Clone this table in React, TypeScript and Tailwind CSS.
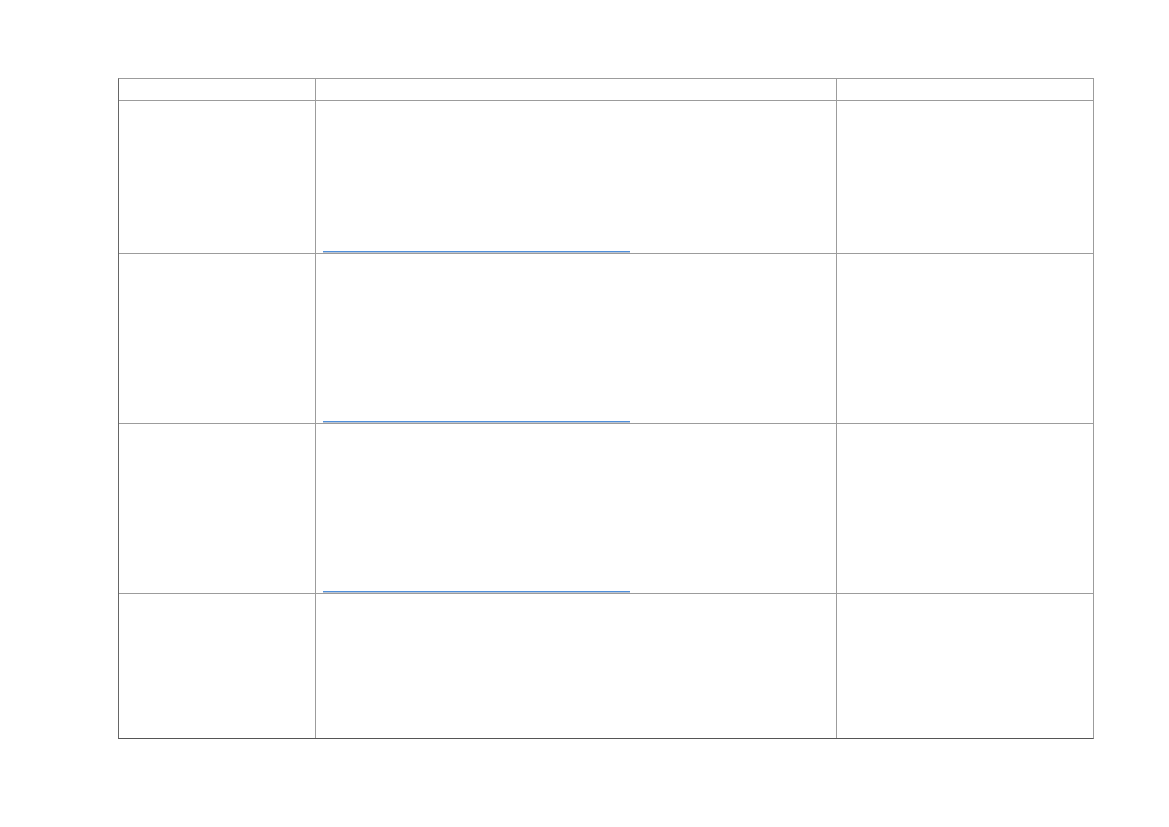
import React from "react";

interface Row {
    height: string;
    link: boolean;
    last?: boolean;
}

const rows: Row[] = [
    { height: "h-[153px]", link: true },
    { height: "h-[170px]", link: true },
    { height: "h-[170px]", link: true },
    { height: "h-[144px]", link: false, last: true },
];

const App = (): JSX.Element => {
    return (
        <div className="min-h-[827px] w-[1169px] bg-white pt-[78px] pl-[118px] font-['Liberation_Sans',sans-serif]">
            <div className="w-[976px] border-t border-r border-t-[#9c9c9c] border-r-[#9c9c9c] border-l border-b border-l-[#666666] border-b-[#555555]">
                {/* header row */}
                <div className="flex h-[22px] border-b border-[#9c9c9c]">
                    <div className="w-[197px] border-r border-[#9c9c9c]" />
                    <div className="w-[521px] border-r border-[#9c9c9c]" />
                    <div className="flex-1" />
                </div>
                {rows.map((row, i) => (
                    <div
                        key={i}
                        className={`flex ${row.height} ${row.last ? "" : "border-b border-[#9c9c9c]"}`}
                    >
                        <div className="w-[197px] border-r border-[#9c9c9c]" />
                        <div className="w-[521px] border-r border-[#9c9c9c] flex flex-col justify-end">
                            {row.link && (
                                <div className="ml-[7px] w-[307px]">
                                    <div className="h-px bg-[#4f8fdb]" />
                                    <div className="h-px bg-[#b8c4d6]" />
                                </div>
                            )}
                        </div>
                        <div className="flex-1" />
                    </div>
                ))}
            </div>
        </div>
    );
};

export default App;
